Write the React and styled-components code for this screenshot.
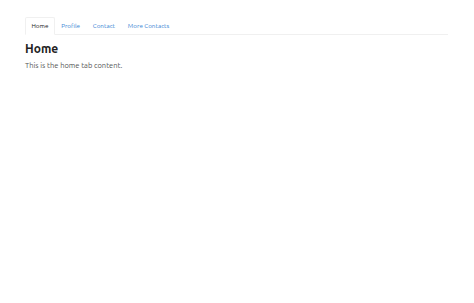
import React, { useState } from "react";
import styled, { createGlobalStyle } from "styled-components";

const GlobalStyle = createGlobalStyle`
  body {
    margin: 0;
    background: #ffffff;
    font-family: "Ubuntu", "Lato", "Open Sans", sans-serif;
  }
`;

const Page = styled.div`
  padding: 17px 26px 0 25px;
`;

const TabBar = styled.div`
  display: flex;
  border-bottom: 1px solid #f0f0f0;
`;

const Tab = styled.button`
  font-family: inherit;
  font-size: 6.3px;
  line-height: 1;
  padding: 5px 5.4px;
  margin-bottom: -1px;
  background: transparent;
  cursor: pointer;
  color: #3a86d4;
  border: 1px solid transparent;
  border-radius: 2px 2px 0 0;

  ${({ active }) =>
    active &&
    `
    color: #222222;
    background: #ffffff;
    border-color: #f0f0f0 #f0f0f0 #ffffff;
  `}
`;

const Heading = styled.h2`
  margin: 6px 0 0;
  font-size: 12px;
  font-weight: 700;
  color: #222222;
  line-height: 1.25;
`;

const Content = styled.p`
  margin: 5px 0 0;
  font-size: 7.5px;
  color: #555555;
`;

const tabs = [
  { id: "home", name: "Home", title: "Home", text: "This is the home tab content." },
  { id: "profile", name: "Profile", title: "Profile", text: "This is the profile tab content." },
  { id: "contact", name: "Contact", title: "Contact", text: "This is the contact tab content." },
  { id: "more", name: "More Contacts", title: "More Contacts", text: "This is the more contacts tab content." },
];

const App = () => {
  const [selected, setSelected] = useState("home");
  const current = tabs.find((t) => t.id === selected);

  return (
    <>
      <GlobalStyle />
      <Page>
        <TabBar>
          {tabs.map((t) => (
            <Tab key={t.id} active={t.id === selected} onClick={() => setSelected(t.id)}>
              {t.name}
            </Tab>
          ))}
        </TabBar>
        <Heading>{current.title}</Heading>
        <Content>{current.text}</Content>
      </Page>
    </>
  );
};

export default App;
